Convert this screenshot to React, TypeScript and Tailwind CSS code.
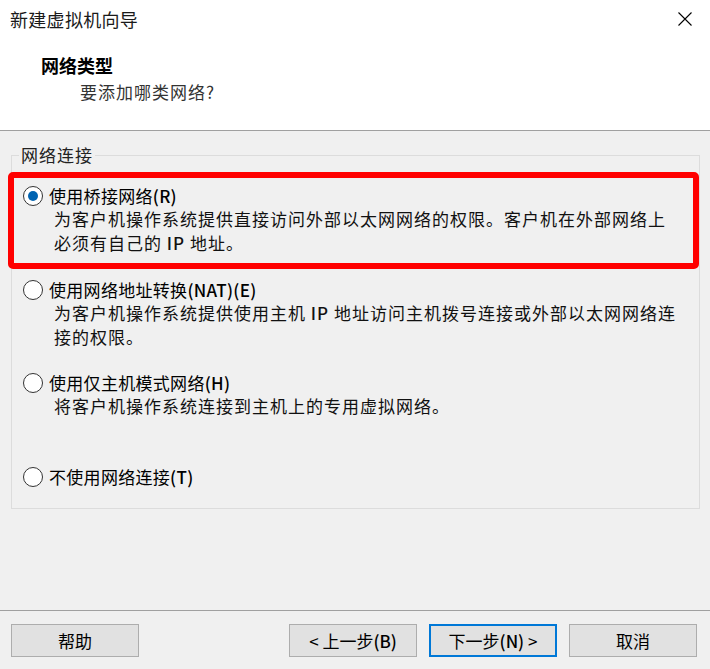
import React from "react";

function Radio({ checked }: { checked?: boolean }) {
  return (
    <span className="flex h-[20px] w-[20px] shrink-0 items-center justify-center rounded-full border border-[#333333] bg-white">
      {checked && <span className="h-[10px] w-[10px] rounded-full bg-[#0063b1]" />}
    </span>
  );
}

function Option({
  title,
  hot,
  checked,
  desc,
}: {
  title: string;
  hot: string;
  checked?: boolean;
  desc?: React.ReactNode;
}) {
  return (
    <div className="flex flex-col">
      <div className="flex items-center h-[22px]">
        <Radio checked={checked} />
        <span className="ml-[6px] text-[17px] leading-[22px] tracking-[0.3px] text-black">
          {title}
          <span className="font-medium">{hot}</span>
        </span>
      </div>
      {desc && (
        <div className="pl-[31px] text-[17px] leading-[24px] tracking-[1px] text-[#111111] whitespace-nowrap">
          {desc}
        </div>
      )}
    </div>
  );
}

function Btn({ children, primary }: { children: React.ReactNode; primary?: boolean }) {
  return (
    <button
      className={
        "h-[33px] w-[128px] bg-[#e1e1e1] text-[17px] leading-[22px] text-black " +
        (primary ? "border-2 border-[#0078d7]" : "border border-[#adadad]")
      }
    >
      {children}
    </button>
  );
}

export default function App() {
  return (
    <div className="w-[710px] h-[669px] bg-[#f0f0f0] flex flex-col font-['Noto_Sans_CJK_SC','Microsoft_YaHei',sans-serif] overflow-hidden">
      <div className="h-[131px] shrink-0 bg-white border-b border-[#a0a0a0] flex flex-col">
        <div className="h-[38px] flex items-center justify-between pl-[10px] pr-[17px]">
          <span className="text-[18px] leading-[24px] tracking-[0.3px] text-[#1a1a1a]">新建虚拟机向导</span>
          <svg width="16" height="16" viewBox="0 0 16 16" className="text-black">
            <path d="M1.5 1.5 L14.5 14.5 M14.5 1.5 L1.5 14.5" stroke="currentColor" strokeWidth="1.1" fill="none" />
          </svg>
        </div>
        <div className="pl-[41px] mt-[15px] text-[18px] leading-[24px] font-bold text-black">网络类型</div>
        <div className="pl-[80px] mt-[3px] text-[17px] leading-[24px] tracking-[1px] text-[#333333]">要添加哪类网络?</div>
      </div>

      <fieldset className="mt-[12px] ml-[11px] w-[687px] border border-[#dcdcdc] pb-[20px]">
        <legend className="ml-[7px] px-[2px] text-[17px] leading-[24px] tracking-[1px] text-[#222222]">网络连接</legend>
        <div className="-ml-[4px] mt-[5px] w-[691px] border-[6px] border-[#ff0000] rounded-[5px] pl-[9px] pt-[7px] pb-[8px]">
          <Option
            checked
            title="使用桥接网络"
            hot="(R)"
            desc={
              <>
                为客户机操作系统提供直接访问外部以太网网络的权限。客户机在外部网络上
                <br />
                必须有自己的 <span className="font-medium">IP</span> 地址。
              </>
            }
          />
        </div>
        <div className="pl-[11px] mt-[10px] flex flex-col">
          <Option
            title="使用网络地址转换"
            hot="(NAT)(E)"
            desc={
              <>
                为客户机操作系统提供使用主机 <span className="font-medium">IP</span> 地址访问主机拨号连接或外部以太网网络连
                <br />
                接的权限。
              </>
            }
          />
          <div className="mt-[23px]">
            <Option title="使用仅主机模式网络" hot="(H)" desc={<>将客户机操作系统连接到主机上的专用虚拟网络。</>} />
          </div>
          <div className="mt-[48px]">
            <Option title="不使用网络连接" hot="(T)" />
          </div>
        </div>
      </fieldset>

      <div className="flex-1" />
      <div className="h-[1px] shrink-0 bg-[#a0a0a0]" />
      <div className="h-[58px] shrink-0 flex items-start pt-[13px] pl-[11px] pr-[13px]">
        <Btn>帮助</Btn>
        <div className="flex-1" />
        <div className="flex gap-[12px]">
          <Btn>
            &lt; 上一步<span className="font-medium">(B)</span>
          </Btn>
          <Btn primary>
            下一步<span className="font-medium">(N)</span> &gt;
          </Btn>
          <Btn>取消</Btn>
        </div>
      </div>
    </div>
  );
}
